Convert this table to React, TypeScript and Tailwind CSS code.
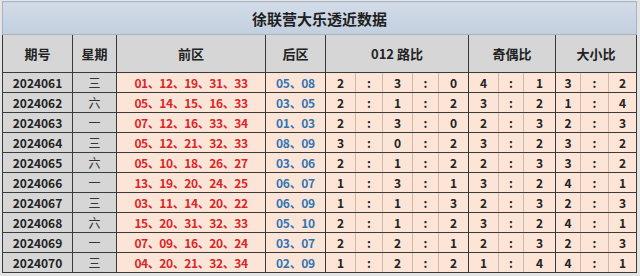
import React from 'react';

type Row = {
  issue: string;
  week: string;
  front: string;
  back: string;
  road: [number, number, number];
  oddEven: [number, number];
  bigSmall: [number, number];
};

const rows: Row[] = [
  { issue: '2024061', week: '三', front: '01、12、19、31、33', back: '05、08', road: [2, 3, 0], oddEven: [4, 1], bigSmall: [3, 2] },
  { issue: '2024062', week: '六', front: '05、14、15、16、33', back: '03、05', road: [2, 1, 2], oddEven: [3, 2], bigSmall: [1, 4] },
  { issue: '2024063', week: '一', front: '07、12、16、33、34', back: '01、03', road: [2, 3, 0], oddEven: [2, 3], bigSmall: [2, 3] },
  { issue: '2024064', week: '三', front: '05、12、21、32、33', back: '08、09', road: [3, 0, 2], oddEven: [3, 2], bigSmall: [3, 2] },
  { issue: '2024065', week: '六', front: '05、10、18、26、27', back: '03、06', road: [2, 1, 2], oddEven: [2, 3], bigSmall: [3, 2] },
  { issue: '2024066', week: '一', front: '13、19、20、24、25', back: '06、07', road: [1, 3, 1], oddEven: [3, 2], bigSmall: [4, 1] },
  { issue: '2024067', week: '三', front: '03、11、14、20、22', back: '06、09', road: [1, 1, 3], oddEven: [2, 3], bigSmall: [2, 3] },
  { issue: '2024068', week: '六', front: '15、20、31、32、33', back: '05、10', road: [2, 1, 2], oddEven: [3, 2], bigSmall: [4, 1] },
  { issue: '2024069', week: '一', front: '07、09、16、20、24', back: '03、07', road: [2, 2, 1], oddEven: [2, 3], bigSmall: [2, 3] },
  { issue: '2024070', week: '三', front: '04、20、21、32、34', back: '02、09', road: [1, 2, 2], oddEven: [1, 4], bigSmall: [4, 1] },
];

const colWidths = [70, 44, 149, 60, 30, 27, 30, 26, 30, 30, 25, 32, 25, 28, 28];

const dark = 'border border-[#3a3a3a]';
const subL = 'border-l border-l-[#cdb9a9]';

export default function App() {
  return (
    <div
      className="w-[640px] h-[276px] bg-[#e4e4e4] pl-[2px] pt-[1px] overflow-hidden"
      style={{ fontFamily: '"Noto Sans CJK SC", "Noto Sans", sans-serif' }}
    >
      <table className="table-fixed border-collapse w-[634px] text-[#222]">
        <colgroup>
          {colWidths.map((w, i) => (
            <col key={i} style={{ width: w }} />
          ))}
        </colgroup>
        <thead>
          <tr className="h-[33px]">
            <th
              colSpan={15}
              className="border border-[#a9b4c2] bg-gradient-to-b from-[#d3dce8] to-[#c2cfdf] text-[15px] font-bold leading-none text-[#1e1e1e]"
            >
              徐联营大乐透近数据
            </th>
          </tr>
          <tr className="h-[38px] bg-[#d6d6d6] text-[13px] font-bold">
            <th className={dark}>期号</th>
            <th className={dark}>星期</th>
            <th className={dark}>前区</th>
            <th className={dark}>后区</th>
            <th colSpan={5} className={dark}>012 路比</th>
            <th colSpan={3} className={dark}>奇偶比</th>
            <th colSpan={3} className={dark}>大小比</th>
          </tr>
        </thead>
        <tbody className="text-[12px] font-bold leading-none">
          {rows.map((r) => (
            <tr key={r.issue} className="h-[20px]">
              <td className={`${dark} bg-[#d6d6d6] text-center`}>{r.issue}</td>
              <td className={`${dark} bg-[#d6d6d6] text-center font-normal text-[#333]`}>{r.week}</td>
              <td className={`${dark} bg-[#fce4d6] text-center text-[#d9262b] tracking-[-0.4px]`}>{r.front}</td>
              <td className={`${dark} bg-[#fce4d6] text-center text-[#2f75b5] tracking-[-0.3px]`}>{r.back}</td>
              <td className="border-y border-l border-[#3a3a3a] bg-[#fce4d6] text-center">{r.road[0]}</td>
              <td className={`border-y border-[#3a3a3a] ${subL} bg-[#fce4d6] text-center`}>:</td>
              <td className={`border-y border-[#3a3a3a] ${subL} bg-[#fce4d6] text-center`}>{r.road[1]}</td>
              <td className={`border-y border-[#3a3a3a] ${subL} bg-[#fce4d6] text-center`}>:</td>
              <td className={`border-y border-r border-[#3a3a3a] ${subL} bg-[#fce4d6] text-center`}>{r.road[2]}</td>
              <td className="border-y border-l border-[#3a3a3a] bg-[#fce4d6] text-center">{r.oddEven[0]}</td>
              <td className={`border-y border-[#3a3a3a] ${subL} bg-[#fce4d6] text-center`}>:</td>
              <td className={`border-y border-r border-[#3a3a3a] ${subL} bg-[#fce4d6] text-center`}>{r.oddEven[1]}</td>
              <td className="border-y border-l border-[#3a3a3a] bg-[#fce4d6] text-center">{r.bigSmall[0]}</td>
              <td className={`border-y border-[#3a3a3a] ${subL} bg-[#fce4d6] text-center`}>:</td>
              <td className={`border-y border-r border-[#3a3a3a] ${subL} bg-[#fce4d6] text-center`}>{r.bigSmall[1]}</td>
            </tr>
          ))}
        </tbody>
      </table>
    </div>
  );
}
